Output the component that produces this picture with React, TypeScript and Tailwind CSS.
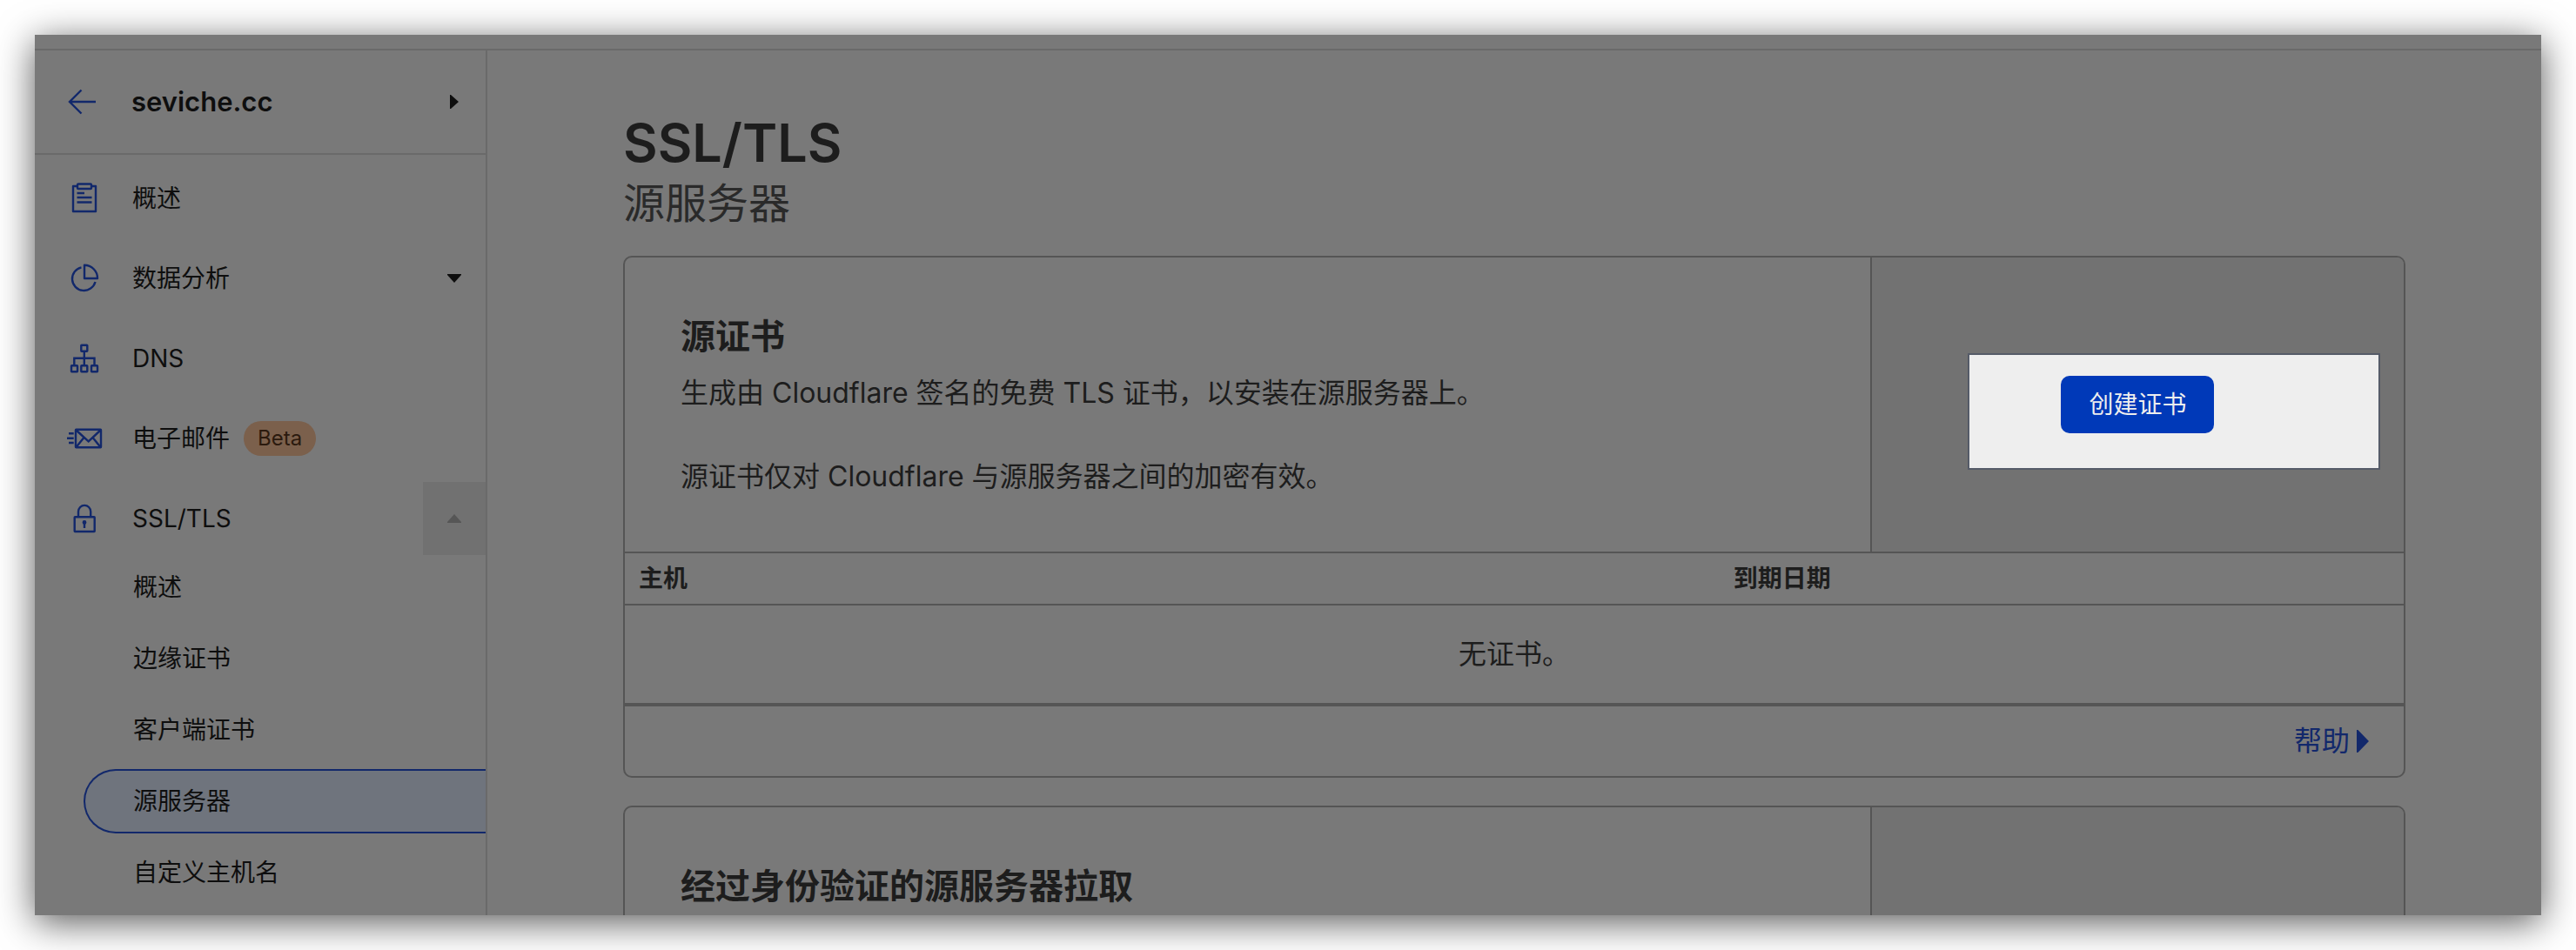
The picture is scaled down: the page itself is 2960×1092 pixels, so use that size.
import React from "react";

const ICON = "size-10 shrink-0 overflow-visible fill-none stroke-[#12286b] stroke-[2.4]";

const ArrowIcon = () => (
  <svg viewBox="0 0 40 40" className={ICON} aria-hidden="true">
    <path d="M34 20H4M17.5 6.5L4 20l13.5 13.5" />
  </svg>
);

const ClipboardIcon = () => (
  <svg viewBox="0 0 40 40" className={ICON} aria-hidden="true">
    <path d="M13 6H8v29h26V6h-5" strokeLinejoin="round" />
    <rect x="13" y="3.5" width="16" height="5.5" rx="1" />
    <path d="M12.5 14H21M12.5 19h17M12.5 24.5h17" />
  </svg>
);

const PieIcon = () => (
  <svg viewBox="0 0 40 40" className={ICON} aria-hidden="true">
    <path d="M17.5 7.3A13.5 13.5 0 1 0 33.5 24" />
    <path d="M21 20V4.8A15 15 0 0 1 36 20Z" strokeLinejoin="round" />
  </svg>
);

const NetworkIcon = () => (
  <svg viewBox="0 0 40 40" className={ICON} aria-hidden="true">
    <rect x="17.3" y="4.7" width="7" height="7" rx="0.5" />
    <rect x="6" y="28.3" width="7" height="7" rx="0.5" />
    <rect x="17.3" y="28.3" width="7" height="7" rx="0.5" />
    <rect x="29" y="28.3" width="7" height="7" rx="0.5" />
    <path d="M20.8 11.7v16.6M9.3 28.3v-8.6h23.2v8.6" />
  </svg>
);

const MailIcon = () => (
  <svg viewBox="0 0 40 40" className={ICON} aria-hidden="true">
    <rect x="11" y="9.7" width="29" height="20.6" rx="0.5" />
    <path d="M11 10l14.7 13.3L40 10M11.5 30L20 19.5M39.5 30L31 19.5" />
    <path d="M3 14.3h5.7M1 19.7h7.7M3 25h5.7" />
  </svg>
);

const LockIcon = () => (
  <svg viewBox="0 0 40 40" className={ICON} aria-hidden="true">
    <rect x="9.7" y="18.3" width="23" height="16.7" rx="0.5" />
    <path d="M14 18.3V12a7.1 7.1 0 0 1 14.2 0v6.3M21 25v6" />
    <circle cx="21" cy="24.5" r="1.2" />
  </svg>
);

const CaretRight = ({ className }: { className: string }) => (
  <svg viewBox="0 0 10 18" preserveAspectRatio="none" className={className} aria-hidden="true">
    <path d="M0 0h1l9 9-9 9H0z" />
  </svg>
);

const CaretDown = ({ className }: { className: string }) => (
  <svg viewBox="0 0 16 10" className={className} aria-hidden="true">
    <path d="M0 0h16v1L8 10 0 1z" />
  </svg>
);

type Item = {
  label: string;
  icon: React.ReactNode;
  badge?: string;
  toggle?: "open" | "closed";
};

const NAV: Item[] = [
  { label: "概述", icon: <ClipboardIcon /> },
  { label: "数据分析", icon: <PieIcon />, toggle: "closed" },
  { label: "DNS", icon: <NetworkIcon /> },
  { label: "电子邮件", icon: <MailIcon />, badge: "Beta" },
  { label: "SSL/TLS", icon: <LockIcon />, toggle: "open" },
];

const SUB = ["概述", "边缘证书", "客户端证书", "源服务器", "自定义主机名"];
const ACTIVE = "源服务器";

function Sidebar() {
  return (
    <aside className="w-[520px] shrink-0 border-r-2 border-[#6a6a6a] text-[28px] leading-10 text-[#0e0e0e]">
      <div className="flex h-30 items-center border-b-2 border-[#6a6a6a] pl-9">
        <a href="#back" aria-label="返回">
          <ArrowIcon />
        </a>
        <button type="button" className="ml-[35px] flex grow items-center justify-between pr-[31px] text-[31px] font-semibold">
          seviche.cc
          <CaretRight className="h-4 w-2.5 fill-current" />
        </button>
      </div>
      <nav className="pt-2">
        <ul className="flex flex-col gap-2">
          {NAV.map((item) => (
            <li key={item.label} className="flex h-21 items-stretch">
              <a href={`#${item.label}`} className="flex grow items-center pl-9">
                {item.icon}
                <span className="ml-9">{item.label}</span>
                {item.badge && (
                  <span className="ml-4 rounded-full bg-[#7b604c] px-4 text-[24px] text-[#2b1a0e]">{item.badge}</span>
                )}
              </a>
              {item.toggle === "closed" && (
                <button type="button" aria-label="展开" className="flex w-18 items-center justify-center">
                  <CaretDown className="h-2.5 w-4 fill-current" />
                </button>
              )}
              {item.toggle === "open" && (
                <button type="button" aria-label="收起" className="flex w-18 items-center justify-center bg-[#717171]">
                  <CaretDown className="h-2.5 w-4 rotate-180 fill-[#565656]" />
                </button>
              )}
            </li>
          ))}
        </ul>
        <ul className="flex flex-col gap-2 pl-14">
          {SUB.map((label) => (
            <li key={label}>
              <a
                href={`#ssl-${label}`}
                aria-current={label === ACTIVE ? "page" : undefined}
                className={
                  label === ACTIVE
                    ? "flex h-[74px] items-center rounded-l-full border-2 border-r-0 border-[#12286b] bg-[#6f747d] pl-[55px]"
                    : "flex h-[74px] items-center border-2 border-r-0 border-transparent pl-[55px]"
                }
              >
                {label}
              </a>
            </li>
          ))}
        </ul>
      </nav>
    </aside>
  );
}

function Card({
  title,
  children,
  action,
  footer,
}: {
  title: string;
  children?: React.ReactNode;
  action?: React.ReactNode;
  footer?: React.ReactNode;
}) {
  return (
    <section className="overflow-hidden rounded-[10px] border-2 border-[#555555]">
      <div className="flex">
        <div className="w-[70%] px-16 pt-[66px] pb-[62px]">
          <h3 className="text-[40px] leading-[50px] font-semibold">{title}</h3>
          <div className="mt-4 flex flex-col gap-12 text-[32px] leading-[48px]">{children}</div>
        </div>
        <div className="relative flex w-[30%] items-center justify-center border-l-2 border-[#555555] bg-[#727272]">
          {action}
        </div>
      </div>
      {footer}
    </section>
  );
}

export default function App() {
  return (
    <div className="h-screen bg-white p-10 font-['Inter','Noto_Sans_CJK_SC',sans-serif]">
      <div className="flex h-full flex-col overflow-hidden bg-[#797979] shadow-[0_8px_40px_rgba(0,0,0,0.66)]">
        <div className="h-[18px] shrink-0 border-b-2 border-[#6a6a6a]" />
        <div className="flex min-h-0 grow">
          <Sidebar />
          <main className="grow px-[156px] pt-[66px] text-[#1d1d1d]">
            <h1 className="text-[61px] leading-[80px] font-semibold">SSL/TLS</h1>
            <h2 className="text-[48px] leading-[60px] text-[#2a2a2a]">源服务器</h2>
            <div className="mt-[30px] flex flex-col gap-8">
              <Card
                title="源证书"
                action={
                  <>
                    <div className="absolute top-[110px] right-[27px] bottom-[94px] left-[110px] border-2 border-[#555b68] bg-[#eeeeee]" />
                    <button type="button" className="relative h-[66px] rounded-[10px] bg-[#0039b8] px-8 text-[28px] text-[#eeeeee]">
                      创建证书
                    </button>
                  </>
                }
                footer={
                  <>
                    <table className="w-full table-fixed border-t-2 border-[#555555] text-left">
                      <thead>
                        <tr className="h-[60px] border-b-2 border-[#555555] text-[28px]">
                          <th className="w-8/13 px-4 font-bold">主机</th>
                          <th className="px-4 font-bold">到期日期</th>
                        </tr>
                      </thead>
                      <tbody>
                        <tr className="h-[113px] text-[32px]">
                          <td colSpan={2} className="text-center">无证书。</td>
                        </tr>
                      </tbody>
                    </table>
                    <div className="flex h-21 items-center justify-end border-t-4 border-[#555555] pr-10">
                      <button type="button" className="flex items-center gap-2 text-[32px] text-[#12286b]">
                        帮助
                        <CaretRight className="h-[26px] w-3.5 fill-current" />
                      </button>
                    </div>
                  </>
                }
              >
                <p>生成由 Cloudflare 签名的免费 TLS 证书，以安装在源服务器上。</p>
                <p>源证书仅对 Cloudflare 与源服务器之间的加密有效。</p>
              </Card>
              <Card title="经过身份验证的源服务器拉取" />
            </div>
          </main>
        </div>
      </div>
    </div>
  );
}
